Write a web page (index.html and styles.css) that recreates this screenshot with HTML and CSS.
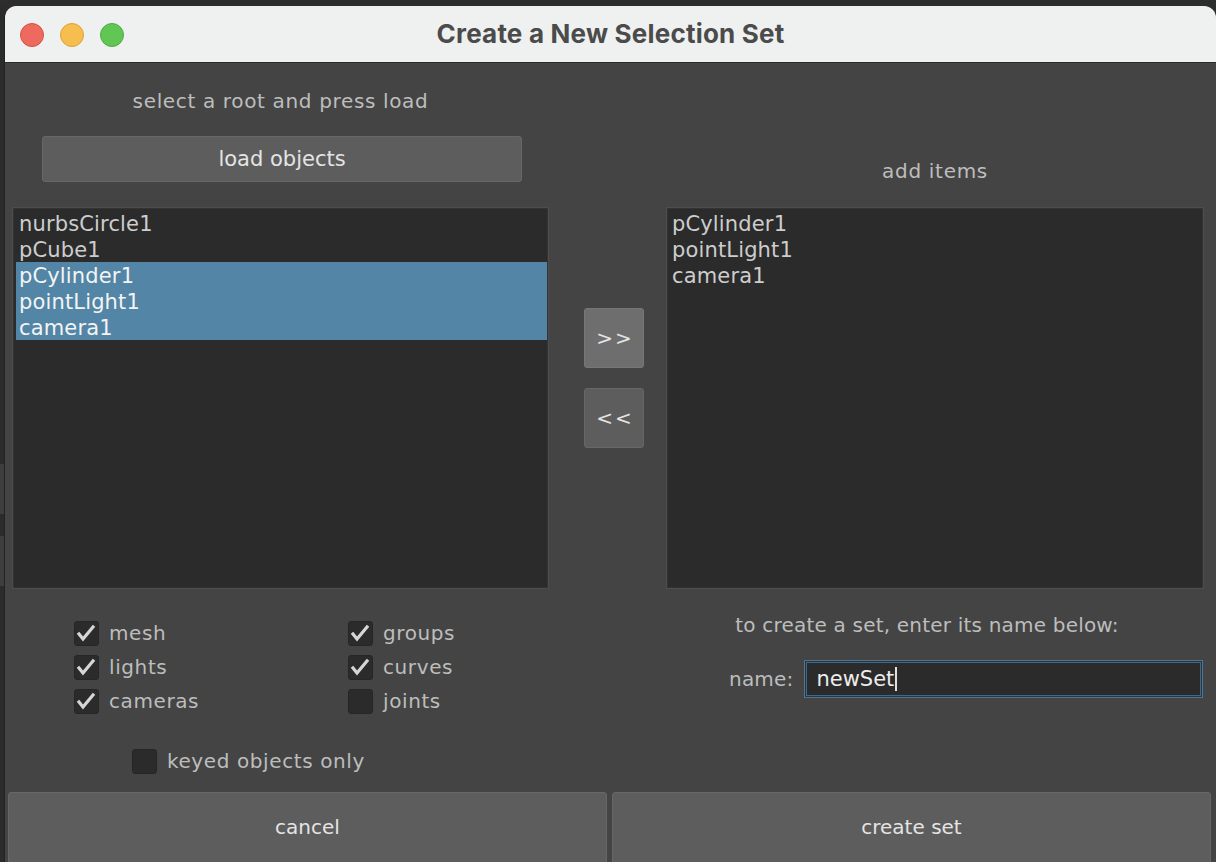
FILE: index.html
```html
<!DOCTYPE html>
<html>
<head>
<meta charset="utf-8">
<link rel="stylesheet" href="styles.css">
</head>
<body>
<div class="desk">
  <div class="edge">
    <div class="edge-a"></div>
    <div class="edge-b"></div>
    <div class="edge-c"></div>
  </div>
  <div class="window">
    <div class="titlebar">
      <div class="lights">
        <span class="light red"></span>
        <span class="light yellow"></span>
        <span class="light green"></span>
      </div>
      <div class="title">Create a New Selection Set</div>
    </div>
    <div class="content">
      <div class="main">
        <div class="col-left">
          <div class="label top-label">select a root and press load</div>
          <button class="btn load">load objects</button>
          <div class="list">
            <div class="row">nurbsCircle1</div>
            <div class="row">pCube1</div>
            <div class="row sel">pCylinder1</div>
            <div class="row sel">pointLight1</div>
            <div class="row sel">camera1</div>
          </div>
          <div class="checks">
            <label class="check"><span class="box on"><svg viewBox="0 0 25 25"><polyline points="5,13 9,18 19,6"/></svg></span>mesh</label>
            <label class="check"><span class="box on"><svg viewBox="0 0 25 25"><polyline points="5,13 9,18 19,6"/></svg></span>groups</label>
            <label class="check"><span class="box on"><svg viewBox="0 0 25 25"><polyline points="5,13 9,18 19,6"/></svg></span>lights</label>
            <label class="check"><span class="box on"><svg viewBox="0 0 25 25"><polyline points="5,13 9,18 19,6"/></svg></span>curves</label>
            <label class="check"><span class="box on"><svg viewBox="0 0 25 25"><polyline points="5,13 9,18 19,6"/></svg></span>cameras</label>
            <label class="check"><span class="box"></span>joints</label>
          </div>
          <label class="check keyed"><span class="box"></span>keyed objects only</label>
        </div>
        <div class="col-mid">
          <button class="btn arrow add">&gt;&gt;</button>
          <button class="btn arrow remove">&lt;&lt;</button>
        </div>
        <div class="col-right">
          <div class="label add-label">add items</div>
          <div class="list">
            <div class="row">pCylinder1</div>
            <div class="row">pointLight1</div>
            <div class="row">camera1</div>
          </div>
          <div class="label create-label">to create a set, enter its name below:</div>
          <div class="name-row">
            <span class="label name-label">name:</span>
            <div class="input"><span class="value">newSet</span><span class="caret"></span></div>
          </div>
        </div>
      </div>
      <div class="footer">
        <button class="btn big">cancel</button>
        <button class="btn big">create set</button>
      </div>
    </div>
  </div>
</div>
</body>
</html>
```

FILE: styles.css
```css
* { box-sizing: border-box; }
html, body {
  margin: 0;
  padding: 0;
  width: 1216px;
  height: 862px;
  overflow: hidden;
  background: #2d2d2d;
  font-family: "DejaVu Sans", "Liberation Sans", sans-serif;
}
.desk {
  display: flex;
  height: 862px;
  padding-top: 6px;
}
.edge {
  width: 4px;
  display: flex;
  flex-direction: column;
  overflow: hidden;
  background: #2b2b2b;
}
.edge-a { height: 436px; }
.edge-b, .edge-c {
  height: 50px;
  margin-top: 22px;
  background: #3e3e3e;
}
.window {
  width: 1212px;
  height: 856px;
  border-radius: 12px 12px 0 0;
  overflow: hidden;
  display: flex;
  flex-direction: column;
  background: #444444;
  border-left: 1px solid #222;
}
.titlebar {
  height: 57px;
  flex: none;
  background: #eff1f0;
  border-bottom: 1px solid #2a2a2a;
  display: flex;
  align-items: center;
  position: relative;
}
.lights {
  display: flex;
  gap: 16px;
  padding-left: 15px;
  padding-top: 1px;
}
.light {
  width: 24px;
  height: 24px;
  border-radius: 50%;
  display: block;
}
.red { background: #ee6a5f; border: 1px solid #d65248; }
.yellow { background: #f5be4f; border: 1px solid #dca33a; }
.green { background: #62c655; border: 1px solid #4dab41; }
.title {
  position: absolute;
  left: 0;
  right: 0;
  top: 0;
  bottom: 0;
  text-align: center;
  line-height: 56px;
  font-family: Inter, "Liberation Sans", sans-serif;
  font-weight: 700;
  font-size: 26px;
  letter-spacing: 0.2px;
  color: #4b4b4b;
  pointer-events: none;
}
.content {
  flex: 1;
  display: flex;
  flex-direction: column;
}
.main {
  display: flex;
  padding-left: 8px;
  flex: 1;
}
.label {
  color: #bdbdbd;
  font-size: 20px;
  line-height: 24px;
}
.col-left {
  width: 535px;
  display: flex;
  flex-direction: column;
}
.top-label {
  margin-top: 26px;
  text-align: center;
  letter-spacing: 0.65px;
}
.btn {
  font-family: "DejaVu Sans", "Liberation Sans", sans-serif;
  background: #5d5d5d;
  border: 1px solid #676767;
  border-radius: 3px;
  color: #e4e4e4;
  font-size: 20px;
  padding: 0;
}
.load {
  width: 480px;
  height: 46px;
  margin-top: 23px;
  margin-left: 29px;
  font-size: 21px;
}
.list {
  margin-top: 26px;
  height: 380px;
  background: #2b2b2b;
  border: 1px solid #333;
  box-shadow: 0 0 0 1px #4d4d4d;
  padding: 1px 0 0 2px;
}
.row {
  height: 26px;
  line-height: 29px;
  font-size: 21px;
  letter-spacing: 0.15px;
  color: #cdcdcd;
  padding-left: 3px;
  white-space: nowrap;
}
.row.sel {
  background: #5285a6;
  color: #f4f4f4;
}
.checks {
  display: grid;
  grid-template-columns: 274px auto;
  row-gap: 9px;
  margin-top: 33px;
  margin-left: 61px;
}
.check {
  display: flex;
  align-items: center;
  gap: 10px;
  color: #bdbdbd;
  font-size: 20px;
  letter-spacing: 0.6px;
  line-height: 25px;
}
.box {
  width: 25px;
  height: 25px;
  border-radius: 3px;
  background: #2b2b2b;
  border: 1px solid #262626;
  display: block;
  flex: none;
}
.box svg {
  width: 25px;
  height: 25px;
  display: block;
  margin: -1px;
}
.box polyline {
  fill: none;
  stroke: #d6d6d6;
  stroke-width: 3.2;
  stroke-linecap: square;
}
.keyed {
  margin-top: 35px;
  margin-left: 119px;
}
.col-mid {
  width: 119px;
  display: flex;
  flex-direction: column;
  padding-left: 36px;
  padding-top: 245px;
  gap: 20px;
}
.arrow {
  width: 60px;
  height: 60px;
  font-size: 20px;
  letter-spacing: 2px;
  text-indent: 2px;
}
.arrow.add { background: #6e6e6e; border-color: #777; }
.col-right {
  width: 536px;
  display: flex;
  flex-direction: column;
}
.add-label {
  margin-top: 96px;
  text-align: center;
  letter-spacing: 0.7px;
}
.col-right .list {
  margin-top: 25px;
  padding-left: 1px;
}
.create-label {
  margin-top: 25px;
  text-align: center;
  padding-right: 16px;
  letter-spacing: 0.2px;
}
.name-row {
  display: flex;
  align-items: center;
  margin-top: 23px;
  margin-left: 62px;
  gap: 11px;
}
.name-label {
  letter-spacing: 0.2px;
}
.input {
  width: 400px;
  height: 38px;
  background: #2b2b2b;
  border: 1px solid #47779c;
  box-shadow: inset 0 0 0 1px #333, inset 0 0 0 2px #3d6a8c;
  display: flex;
  align-items: center;
  padding-left: 11px;
  color: #ededed;
  font-size: 21px;
}
.caret {
  display: block;
  width: 2px;
  height: 24px;
  background: #e0e0e0;
  margin-left: 1px;
}
.footer {
  display: flex;
  gap: 5px;
  padding: 0 5px 0 3px;
  height: 70px;
  flex: none;
}
.big {
  flex: 1;
  height: 76px;
  font-size: 20px;
  padding-bottom: 6px;
}
```
